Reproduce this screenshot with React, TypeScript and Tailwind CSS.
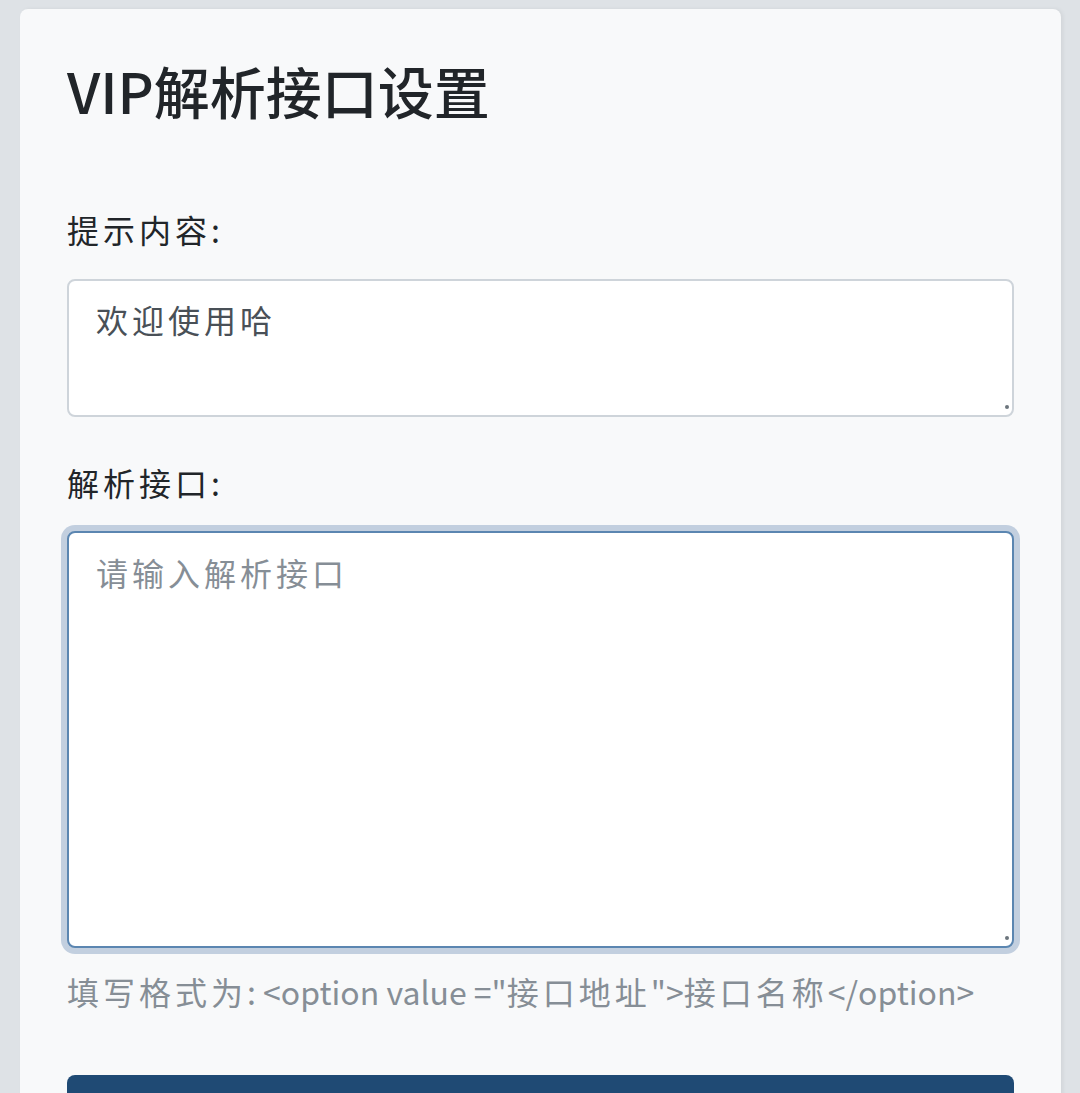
import React from 'react';

const font = { fontFamily: '"Noto Sans CJK SC", "Noto Sans", sans-serif' };

const App: React.FC = () => {
  return (
    <div className="h-[1093px] overflow-hidden bg-[#dee2e6] pl-[20px] pr-[19px] pt-[9px]" style={font}>
      <div className="rounded-[8px] bg-[#f8f9fa] px-[47px] pt-[47px] pb-[40px] shadow-[2px_0_4px_rgba(0,0,0,0.06)]">
        {/* Title */}
        <h3 className="mb-[82px] text-[56px] font-medium leading-[1.2] text-[#212529]">VIP解析接口设置</h3>

        {/* Notice */}
        <div className="mb-[41px]">
          <label className="mb-[26px] block text-[32px] leading-[48px] tracking-[4px] text-[#212529]">提示内容:</label>
          <div className="relative">
            <textarea
              className="block h-[138px] w-full resize-none rounded-[8px] border-2 border-[#ced4da] bg-white px-[27px] py-[14px] text-[32px] leading-[48px] tracking-[4px] text-[#495057] outline-none"
              defaultValue="欢迎使用哈"
            />
            <span className="absolute bottom-[8px] right-[5px] h-[4px] w-[4px] rounded-full bg-[#6c757d]" />
          </div>
        </div>

        {/* Interface list */}
        <div>
          <label className="mb-[25px] block text-[32px] leading-[48px] tracking-[4px] text-[#212529]">解析接口:</label>
          <div className="relative">
            <textarea
              className="block h-[417px] w-full resize-none rounded-[8px] border-2 border-[#5b86b1] bg-white px-[27px] py-[15px] text-[32px] leading-[48px] tracking-[4px] text-[#495057] shadow-[0_0_0_6px_#c2cfdf] outline-none placeholder:text-[#868e96]"
              placeholder="请输入解析接口"
            />
            <span className="absolute bottom-[8px] right-[5px] h-[4px] w-[4px] rounded-full bg-[#6c757d]" />
          </div>
          <p className="mt-[19px] text-[32px] leading-[48px] text-[#868e96]">
            <span className="tracking-[4px]">填写格式为</span>: &lt;option value ="
            <span className="tracking-[4px]">接口地址</span>"&gt;
            <span className="tracking-[4px]">接口名称</span>&lt;/option&gt;
          </p>
        </div>

        {/* Submit (label falls below the visible frame) */}
        <button className="mt-[60px] h-[96px] w-full rounded-[8px] bg-[#1f4a74]" aria-label="保存" />
      </div>
    </div>
  );
};

export default App;
